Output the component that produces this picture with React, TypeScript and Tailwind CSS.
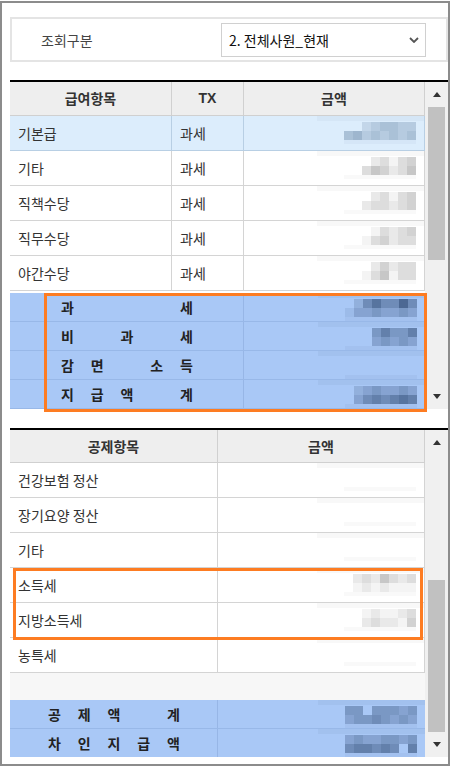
import React from "react";

type Tone = "gray" | "blue" | "sel";

const toneColor: Record<Tone, string> = {
  gray: "#8f8f8f",
  blue: "#35507a",
  sel: "#5f7f9f",
};

// blurred amount — drawn as a mosaic of cells
const Mosaic = ({ rows, tone, h }: { rows: string[]; tone: Tone; h: number }) => {
  const color = toneColor[tone];
  return (
    <svg width={107} height={h} className="absolute right-0 top-0">
      <rect x={0} y={0} width={107} height={5} fill={color} opacity={0.06} />
      {rows.map((r, ri) =>
        r.split("").map((d, ci) =>
          d === "0" ? null : (
            <rect
              key={ri + "-" + ci}
              x={27 + ci * 9}
              y={6 + ri * 9}
              width={9}
              height={9}
              fill={color}
              opacity={Number(d) / 10}
            />
          )
        )
      )}
      <rect x={27} y={24} width={72} height={4} fill={color} opacity={0.05} />
    </svg>
  );
};

const Spread = ({ chars }: { chars: string[] }) => (
  <div className="flex">
    {chars.map((c, i) => (
      <span key={i} className="w-[29.75px] shrink-0">
        {c}
      </span>
    ))}
  </div>
);

const Tri = ({ up }: { up?: boolean }) => (
  <svg width={8} height={5} viewBox="0 0 8 5">
    <path d={up ? "M0 5L4 0L8 5Z" : "M0 0L4 5L8 0Z"} fill="#333" />
  </svg>
);

const Scrollbar = ({ thumb }: { thumb: string }) => (
  <div className="w-[23px] bg-[#f0f0f0] flex flex-col">
    <div className="h-[25px] flex items-center justify-center">
      <Tri up />
    </div>
    <div className="flex-1">
      <div className={"mx-[3px] w-[17px] bg-[#c1c1c1] " + thumb} />
    </div>
    <div className="h-[25px] flex items-center justify-center">
      <Tri />
    </div>
  </div>
);

const payRows = [
  { name: "기본급", tx: "과세", sel: true, m: ["00234433", "45343434"] },
  { name: "기타", tx: "과세", m: ["00023134", "00354235"] },
  { name: "직책수당", tx: "과세", m: ["00023134", "00233234"] },
  { name: "직무수당", tx: "과세", m: ["00013234", "00134233"] },
  { name: "야간수당", tx: "과세", m: ["00024233", "00135133"] },
];

const paySums = [
  { chars: ["과", "", "", "", "세"], m: ["02575585", "13343343"] },
  { chars: ["비", "", "과", "", "세"], m: ["00046446", "00034343"] },
  { chars: ["감", "면", "", "소", "득"], m: [] },
  { chars: ["지", "급", "액", "", "계"], m: ["02343343", "03565676"] },
];

const dedRows = [
  { name: "건강보험 정산", m: [] as string[] },
  { name: "장기요양 정산", m: [] as string[] },
  { name: "기타", m: [] as string[] },
  { name: "소득세", m: ["02325323", "01212111"] },
  { name: "지방소득세", m: ["00121123", "00232214"] },
  { name: "농특세", m: [] as string[] },
];

const dedSums = [
  { chars: ["공", "제", "액", "", "계"], m: ["44044434", "34454343"], h: "h-[29px] border-b border-[#98b8e8]" },
  { chars: ["차", "인", "지", "급", "액"], m: ["34334434", "56656506"], h: "h-[28px]" },
];

export default function App() {
  return (
    <div className="w-[459px] h-[766px] bg-white pt-px font-['Noto_Sans_CJK_KR','Liberation_Sans',sans-serif] text-[14px] text-[#333]">
      <div className="relative w-[450px] h-[765px] border-2 border-[#8c8c8c] pl-2 pt-[14px]">
        {/* filter */}
        <div className="h-[45px] border-2 border-[#e4e4e4] flex items-center pl-[29px] pr-[20px]">
          <span className="text-[#444] leading-none">조회구분</span>
          <div className="ml-auto w-[205px] h-[34px] border border-[#d0d0d0] flex items-center justify-between pl-[7px] pr-[6px] text-[#111]">
            <span className="leading-none">2. 전체사원_현재</span>
            <svg width={10} height={6} viewBox="0 0 10 6">
              <path d="M1 1L5 5L9 1" fill="none" stroke="#555" strokeWidth={1.8} />
            </svg>
          </div>
        </div>

        {/* pay grid */}
        <div className="mt-[18px] border-t-2 border-black flex h-[329px]">
          <div className="w-[415px] flex flex-col">
            <div className="h-[34px] flex bg-[#eeeeee] border-b border-[#d0d0d0] font-bold">
              <div className="w-[162px] border-r border-[#d0d0d0] flex items-center justify-center">급여항목</div>
              <div className="w-[72px] border-r border-[#d0d0d0] flex items-center justify-center font-['Liberation_Sans',sans-serif]">TX</div>
              <div className="flex-1 border-r border-[#d0d0d0] flex items-center justify-center">금액</div>
            </div>
            {payRows.map((r) => (
              <div
                key={r.name}
                className={
                  "h-[35px] flex border-b " +
                  (r.sel ? "bg-[#dcedfc] border-[#b8cfe4]" : "bg-white border-[#d4d4d4]")
                }
              >
                <div className={"w-[162px] border-r pl-2 flex items-center " + (r.sel ? "border-[#b8cfe4]" : "border-[#d4d4d4]")}>{r.name}</div>
                <div className={"w-[72px] border-r pl-2 flex items-center " + (r.sel ? "border-[#b8cfe4]" : "border-[#d4d4d4]")}>{r.tx}</div>
                <div className={"flex-1 relative border-r " + (r.sel ? "border-[#b8cfe4]" : "border-[#d4d4d4]")}>
                  <Mosaic rows={r.m} tone={r.sel ? "sel" : "gray"} h={34} />
                </div>
              </div>
            ))}
            <div className="h-[2px]" />
            {paySums.map((s, i) => (
              <div key={i} className="h-[29px] flex bg-[#a9c8f6] border-b border-[#98b8e8] font-bold text-[#222]">
                <div className="w-[234px] border-r border-[#97b6e6] pl-[51px] flex items-center">
                  <Spread chars={s.chars} />
                </div>
                <div className="flex-1 relative">
                  <Mosaic rows={s.m} tone="blue" h={28} />
                </div>
              </div>
            ))}
          </div>
          <Scrollbar thumb="h-[153px]" />
        </div>

        {/* deduction grid */}
        <div className="mt-[19px] border-t-2 border-black flex h-[329px]">
          <div className="w-[415px] flex flex-col">
            <div className="h-[33px] flex bg-[#eeeeee] border-b border-[#d0d0d0] font-bold">
              <div className="w-[208px] border-r border-[#d0d0d0] flex items-center justify-center">공제항목</div>
              <div className="flex-1 border-r border-[#d0d0d0] flex items-center justify-center">금액</div>
            </div>
            {dedRows.map((r) => (
              <div key={r.name} className="h-[35px] flex bg-white border-b border-[#d4d4d4]">
                <div className="w-[208px] border-r border-[#d4d4d4] pl-2 flex items-center">{r.name}</div>
                <div className="flex-1 relative border-r border-[#d4d4d4]">
                  <Mosaic rows={r.m} tone="gray" h={34} />
                </div>
              </div>
            ))}
            <div className="h-[27px] bg-[#f7f7f7]" />
            {dedSums.map((s, i) => (
              <div key={i} className={"flex bg-[#a9c8f6] font-bold text-[#222] " + s.h}>
                <div className="w-[208px] border-r border-[#97b6e6] pl-[38px] flex items-center">
                  <Spread chars={s.chars} />
                </div>
                <div className="flex-1 relative">
                  <Mosaic rows={s.m} tone="blue" h={28} />
                </div>
              </div>
            ))}
          </div>
          <Scrollbar thumb="mt-[125px] h-[152px]" />
        </div>

        {/* highlight boxes */}
        <div className="absolute left-[42px] top-[290px] w-[383px] h-[119px] border-[3px] border-[#fd7c22]" />
        <div className="absolute left-[11px] top-[565px] w-[410px] h-[72px] border-[3px] border-[#fd7c22]" />
      </div>
    </div>
  );
}
